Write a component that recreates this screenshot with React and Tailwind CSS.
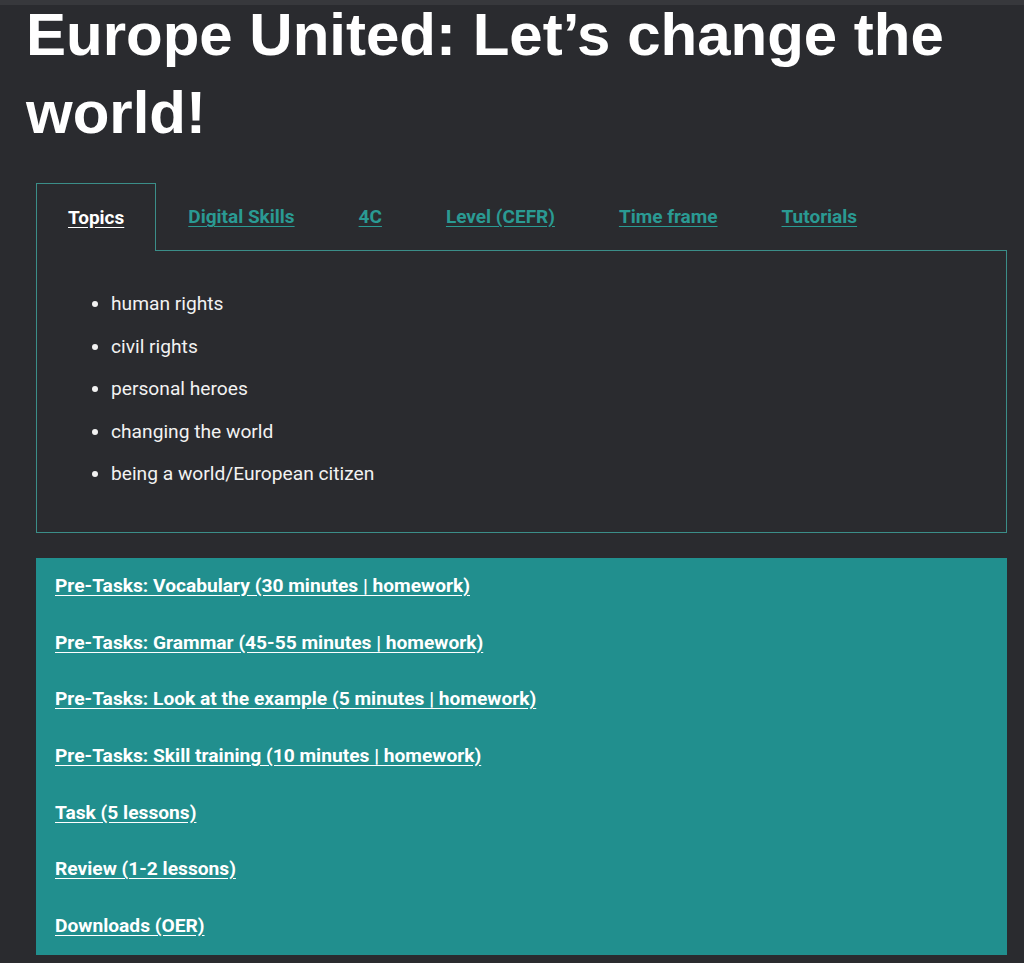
import React from "react";

const tabs = ["Topics", "Digital Skills", "4C", "Level (CEFR)", "Time frame", "Tutorials"];
const topics = [
  "human rights",
  "civil rights",
  "personal heroes",
  "changing the world",
  "being a world/European citizen",
];
const links = [
  "Pre-Tasks: Vocabulary (30 minutes | homework)",
  "Pre-Tasks: Grammar (45-55 minutes | homework)",
  "Pre-Tasks: Look at the example (5 minutes | homework)",
  "Pre-Tasks: Skill training (10 minutes | homework)",
  "Task (5 lessons)",
  "Review (1-2 lessons)",
  "Downloads (OER)",
];

export default function App() {
  return (
    <div className="w-[1024px] h-[963px] overflow-hidden bg-[#2a2b2f] font-['Roboto','Noto_Sans',sans-serif]">
      <div className="h-[5px] bg-[#37383c]" />
      <h1 className="-mt-[9px] pl-[26px] pr-4 font-['Liberation_Sans',Arial,sans-serif] font-bold text-[60px] leading-[78px] text-white">
        Europe United: Let’s change the world!
      </h1>
      <div className="mt-[31px] ml-[36px] w-[971px]">
        <div className="flex h-[68px] border-b border-[#3b8e89]">
          {tabs.map((t, i) => (
            <div
              key={t}
              className={
                i === 0
                  ? "flex items-center pt-[2px] px-[31px] border border-b-0 border-[#3b8e89] bg-[#2a2b2f] -mb-px"
                  : "flex items-center pt-[2px] px-8"
              }
            >
              <span
                className={
                  i === 0
                    ? "text-[19px] font-bold text-white underline underline-offset-[3px]"
                    : "text-[19px] font-bold text-[#2a9a93] underline underline-offset-[3px]"
                }
              >
                {t}
              </span>
            </div>
          ))}
        </div>
        <div className="h-[282px] border border-t-0 border-[#3b8e89] pt-[39px] pl-[74px]">
          <ul className="list-disc text-[19.2px] leading-[27px] text-[#f2f2f2]">
            {topics.map((t) => (
              <li key={t} className="mb-[15.5px]">
                {t}
              </li>
            ))}
          </ul>
        </div>
        <div className="mt-[25px] h-[397px] bg-[#218f8e] px-[19px]">
          {links.map((l) => (
            <div key={l} className="h-[56.7px] flex items-center">
              <span className="text-[19.2px] font-bold text-white underline underline-offset-[3px]">{l}</span>
            </div>
          ))}
        </div>
      </div>
    </div>
  );
}
